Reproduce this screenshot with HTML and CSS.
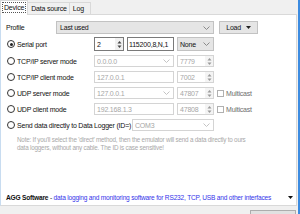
FILE: index.html
```html
<!DOCTYPE html>
<html>
<head>
<meta charset="utf-8">
<link rel="stylesheet" href="styles.css">
</head>
<body>
<div class="win">
  <div class="main">
    <div class="tabs">
      <div class="tab sel"><span class="focus">Device</span></div>
      <div class="tab">Data source</div>
      <div class="tab tab-log">Log</div>
    </div>
    <div class="panel">
      <div class="form">
        <div class="row r-profile">
          <span class="plabel">Profile</span>
          <div class="combo en w-profile"><span>Last used</span><svg class="chev" width="7" height="4" viewBox="0 0 7 4"><polyline points="0.5,0.5 3.5,3.5 6.5,0.5" fill="none" stroke="#8a8a8a" stroke-width="1"/></svg></div>
          <div class="btn load"><span>Load</span><svg width="5" height="3" viewBox="0 0 5 3"><polygon points="0,0 5,0 2.5,3" fill="#222"/></svg></div>
        </div>
        <div class="row r-serial">
          <label class="opt"><span class="radio on"></span><span>Serial port</span></label>
          <div class="field en w-spin1"><span>2</span><span class="spin"><svg width="5" height="9" viewBox="0 0 5 9"><polygon points="0.5,3.5 4.5,3.5 2.5,1" fill="#444"/><polygon points="0.5,5.5 4.5,5.5 2.5,8" fill="#444"/></svg></span></div>
          <div class="field en w-baud"><span>115200,8,N,1</span></div>
          <div class="combo en w-port"><span>None</span><svg class="chev" width="7" height="4" viewBox="0 0 7 4"><polyline points="0.5,0.5 3.5,3.5 6.5,0.5" fill="none" stroke="#8a8a8a" stroke-width="1"/></svg></div>
        </div>
        <div class="row">
          <label class="opt"><span class="radio"></span><span>TCP/IP server mode</span></label>
          <div class="field dis w-host"><span>0.0.0.0</span><svg class="chev" width="7" height="4" viewBox="0 0 7 4"><polyline points="0.5,0.5 3.5,3.5 6.5,0.5" fill="none" stroke="#c4c4c4" stroke-width="1"/></svg></div>
          <div class="field dis w-port"><span>7779</span><span class="spin"><svg width="5" height="9" viewBox="0 0 5 9"><polygon points="0.5,3.5 4.5,3.5 2.5,1" fill="#9a9a9a"/><polygon points="0.5,5.5 4.5,5.5 2.5,8" fill="#9a9a9a"/></svg></span></div>
        </div>
        <div class="row">
          <label class="opt"><span class="radio"></span><span>TCP/IP client mode</span></label>
          <div class="field dis w-host"><span>127.0.0.1</span></div>
          <div class="field dis w-port"><span>7002</span><span class="spin"><svg width="5" height="9" viewBox="0 0 5 9"><polygon points="0.5,3.5 4.5,3.5 2.5,1" fill="#9a9a9a"/><polygon points="0.5,5.5 4.5,5.5 2.5,8" fill="#9a9a9a"/></svg></span></div>
        </div>
        <div class="row">
          <label class="opt"><span class="radio"></span><span>UDP server mode</span></label>
          <div class="field dis w-host"><span>127.0.0.1</span><svg class="chev" width="7" height="4" viewBox="0 0 7 4"><polyline points="0.5,0.5 3.5,3.5 6.5,0.5" fill="none" stroke="#c4c4c4" stroke-width="1"/></svg></div>
          <div class="field dis w-port"><span>47807</span><span class="spin"><svg width="5" height="9" viewBox="0 0 5 9"><polygon points="0.5,3.5 4.5,3.5 2.5,1" fill="#9a9a9a"/><polygon points="0.5,5.5 4.5,5.5 2.5,8" fill="#9a9a9a"/></svg></span></div>
          <label class="chk"><span class="box"></span><span>Multicast</span></label>
        </div>
        <div class="row">
          <label class="opt"><span class="radio"></span><span>UDP client mode</span></label>
          <div class="field dis w-host"><span>192.168.1.3</span></div>
          <div class="field dis w-port"><span>47808</span><span class="spin"><svg width="5" height="9" viewBox="0 0 5 9"><polygon points="0.5,3.5 4.5,3.5 2.5,1" fill="#9a9a9a"/><polygon points="0.5,5.5 4.5,5.5 2.5,8" fill="#9a9a9a"/></svg></span></div>
          <label class="chk"><span class="box"></span><span>Multicast</span></label>
        </div>
        <div class="row">
          <label class="opt w-send"><span class="radio"></span><span>Send data directly to Data Logger (ID=)</span></label>
          <div class="field dis w-com"><span>COM3</span><svg class="chev" width="7" height="4" viewBox="0 0 7 4"><polyline points="0.5,0.5 3.5,3.5 6.5,0.5" fill="none" stroke="#c4c4c4" stroke-width="1"/></svg></div>
        </div>
        <p class="note">Note: If you'll select the 'direct' method, then the emulator will send a data directly to ours<br>data loggers, without any cable. The ID is case sensitive!</p>
      </div>
      <div class="footer">
        <span><b>AGG Software</b> - <span class="link">data logging and monitoring software for RS232, TCP, USB and other interfaces</span></span>
        <svg width="5" height="3" viewBox="0 0 5 3"><polygon points="0,0 5,0 2.5,3" fill="#111"/></svg>
      </div>
    </div>
    <div class="bottom"><div class="bbtn"></div></div>
  </div>
  <div class="edge"></div>
</div>
</body>
</html>
```

FILE: styles.css
```css
html, body {
  margin: 0;
  padding: 0;
}
body {
  width: 300px;
  height: 214px;
  overflow: hidden;
  background: #f0f0f0;
  font-family: "Liberation Sans", Arial, sans-serif;
  font-size: 7px;
  letter-spacing: -0.2px;
  color: #111;
}
.win {
  display: flex;
  width: 300px;
  height: 214px;
}
.main {
  width: 298px;
  display: flex;
  flex-direction: column;
}
.edge {
  width: 2px;
  background: #3c8be0;
}
.tabs {
  height: 14px;
  display: flex;
  align-items: flex-end;
  padding-left: 1px;
}
.tab {
  height: 12px;
  line-height: 12px;
  padding: 0 2px 0 3px;
  border: 1px solid #d9d9d9;
  border-bottom: none;
  margin-left: -1px;
  background: #f0f0f0;
  box-sizing: border-box;
  position: relative;
}
.tab-log {
  padding: 0 6px 0 3px;
}
.tab.sel {
  height: 15px;
  line-height: 12px;
  background: #fff;
  padding: 0 1px;
  z-index: 1;
  margin-bottom: -1px;
}
.focus {
  display: inline-block;
  border: 1px dotted #555;
  line-height: 9px;
  padding: 0 1px;
  margin-top: 1px;
}
.panel {
  flex: 1;
  background: #fff;
  border: 1px solid #d9d9d9;
  border-left-color: #c8dcf0;
  margin-right: 1px;
  display: flex;
  flex-direction: column;
  min-width: 0;
}
.form {
  padding: 6px 0 0 5px;
  display: flex;
  flex-direction: column;
  gap: 4px;
}
.row {
  display: flex;
  align-items: center;
  height: 12px;
  gap: 3px;
}
.r-profile {
  height: 13px;
  gap: 0;
  margin-bottom: -1px;
}
.r-serial {
  height: 14px;
}
.plabel {
  width: 50px;
}
.opt {
  width: 85px;
  display: flex;
  align-items: center;
  gap: 2px;
  white-space: nowrap;
}
.opt.w-send {
  width: 123px;
}
.radio {
  flex: none;
  width: 8px;
  height: 8px;
  box-sizing: border-box;
  border: 1px solid #333;
  border-radius: 50%;
  margin-left: 1px;
  position: relative;
  background: #fff;
}
.radio.on::after {
  content: "";
  position: absolute;
  left: 1.5px;
  top: 1.5px;
  width: 3px;
  height: 3px;
  border-radius: 50%;
  background: #222;
}
.field, .combo {
  height: 100%;
  box-sizing: border-box;
  display: flex;
  align-items: center;
  justify-content: space-between;
  padding: 0 2px;
  white-space: nowrap;
  overflow: hidden;
}
.field.en {
  border: 1px solid #7a7a7a;
  background: #fff;
  color: #111;
}
.field.dis {
  border: 1px solid #d4d4d4;
  background: #fff;
  color: #a6a6a6;
}
.combo.en {
  border: 1px solid #c2c2c2;
  background: #e5e5e5;
  color: #111;
}
.chev {
  margin-right: 1px;
  flex: none;
}
.spin {
  flex: none;
  height: 100%;
  width: 8px;
  display: flex;
  align-items: center;
  justify-content: center;
  margin-right: -2px;
}
.field.en .spin {
  background: #f0f0f0;
}
.field.dis .spin {
  background: #f4f4f4;
}
.w-profile {
  width: 158px;
  padding-left: 3px;
}
.load {
  margin-left: 5px;
}
.btn {
  width: 39px;
  height: 13px;
  box-sizing: border-box;
  border: 1px solid #c2c2c2;
  background: #e5e5e5;
  display: flex;
  align-items: center;
  justify-content: flex-end;
  gap: 5px;
  padding-right: 6px;
}
.w-spin1 {
  width: 30px;
}
.w-baud {
  width: 47px;
  justify-content: flex-start;
  padding-left: 1px;
}
.w-port {
  width: 37px;
}
.w-host {
  width: 80px;
}
.w-com {
  width: 82px;
}
.chk {
  display: flex;
  align-items: center;
  gap: 2px;
  color: #6e6e6e;
}
.box {
  width: 7px;
  height: 7px;
  box-sizing: border-box;
  border: 1px solid #b0b0b0;
  background: #fff;
}
.note {
  margin: 1px 0 0 11px;
  font-size: 6.3px;
  line-height: 8px;
  color: #a8a8a8;
  white-space: nowrap;
}
.footer {
  margin-top: auto;
  height: 11px;
  display: flex;
  align-items: center;
  justify-content: space-between;
  padding: 0 3px 2px 5px;
  white-space: nowrap;
  font-size: 6.6px;
}
.footer b {
  color: #111;
}
.link {
  color: #3434ea;
}
.bottom {
  height: 8px;
  display: flex;
  justify-content: flex-end;
  align-items: flex-end;
  padding-right: 2px;
}
.bbtn {
  width: 44px;
  height: 3px;
  border: 1px solid #adadad;
  border-bottom: none;
  background: #e1e1e1;
}
```
